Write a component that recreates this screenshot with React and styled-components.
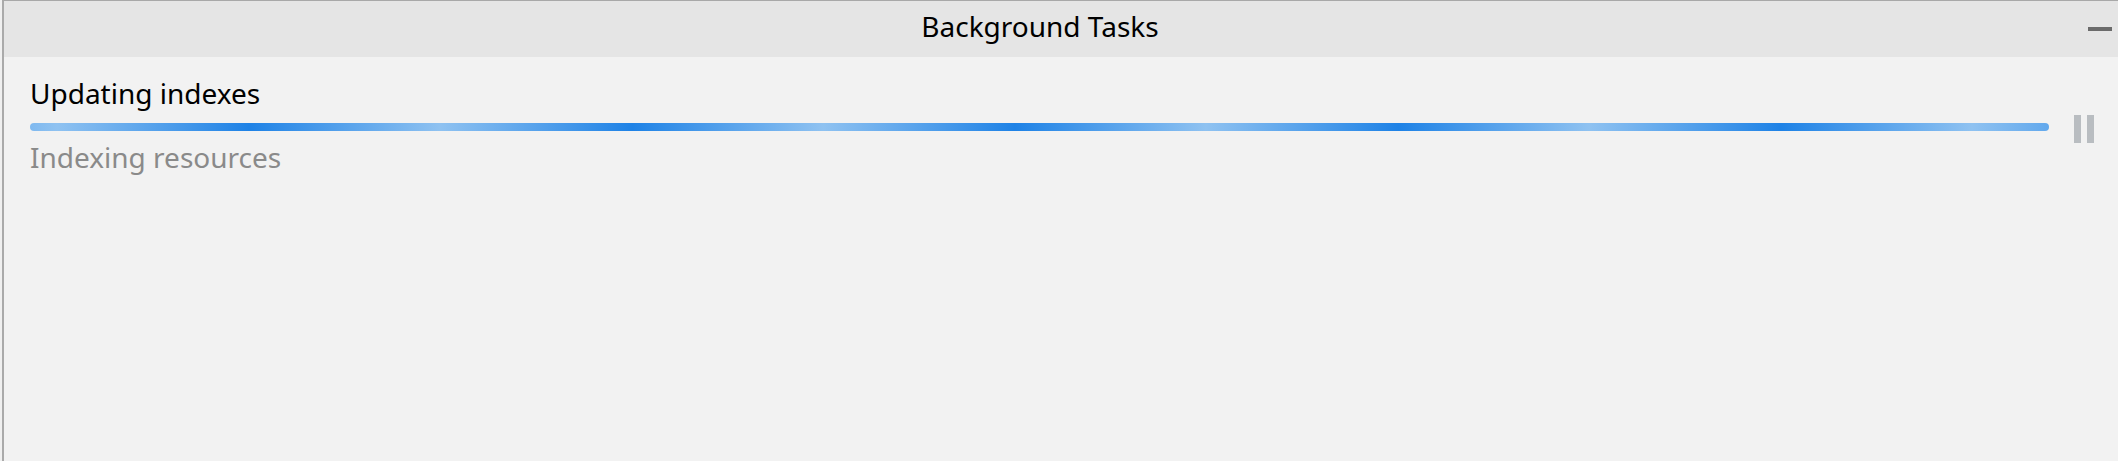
import React from "react";
import styled, { createGlobalStyle } from "styled-components";

const GlobalStyle = createGlobalStyle`
  html, body {
    margin: 0;
    padding: 0;
    background: #f2f2f2;
  }
  body {
    font-family: "Noto Sans", "Open Sans", sans-serif;
  }
`;

const Frame = styled.div`
  padding-left: 2px;
  background: #f0f0f0;
  height: 461px;
  box-sizing: border-box;
`;

const Panel = styled.div`
  height: 100%;
  box-sizing: border-box;
  border-left: 2px solid #aaaaaa;
  border-top: 1px solid #a8a8a8;
  background: #f2f2f2;
  display: flex;
  flex-direction: column;
`;

const Header = styled.div`
  height: 56px;
  background: #e5e5e5;
  display: flex;
  align-items: center;
`;

const Title = styled.div`
  flex: 1;
  text-align: center;
  font-size: 28px;
  color: #000;
  padding-bottom: 6px;
`;

const HeaderButton = styled.button`
  width: 42px;
  height: 40px;
  border: 0;
  background: transparent;
  padding: 0 6px 0 12px;
  display: flex;
  align-items: center;
  justify-content: center;
  cursor: pointer;
`;

const MinimizeMark = styled.span`
  display: block;
  width: 24px;
  height: 4px;
  background: #6b6b6b;
`;

const Body = styled.div`
  padding: 18px 24px 0 26px;
`;

const TaskRow = styled.div`
  display: flex;
  align-items: flex-start;
  gap: 25px;
`;

const TaskInfo = styled.div`
  flex: 1;
  display: flex;
  flex-direction: column;
`;

const TaskTitle = styled.div`
  font-size: 28px;
  line-height: 36px;
  color: ${(props) => props.color || "#000"};
`;

const Track = styled.div`
  height: 8px;
  margin: 12px 0 8px;
  border-radius: 4px;
  background: repeating-linear-gradient(
    90deg,
    #8fc2f1 -356px,
    #1e82e6 -164px,
    #8fc2f1 27px
  );
`;

const PauseButton = styled.button`
  width: 20px;
  height: 28px;
  padding: 0;
  border: 0;
  background: transparent;
  display: flex;
  justify-content: space-between;
  cursor: pointer;
  margin-top: 40px;
`;

const PauseBar = styled.span`
  width: 7px;
  height: 28px;
  background: #b9bdc1;
`;

export default function App() {
  return (
    <>
      <GlobalStyle />
      <Frame>
        <Panel>
          <Header>
            <Title>Background Tasks</Title>
            <HeaderButton aria-label="Minimize">
              <MinimizeMark />
            </HeaderButton>
          </Header>
          <Body>
            <TaskRow>
              <TaskInfo>
                <TaskTitle>Updating indexes</TaskTitle>
                <Track />
                <TaskTitle color="#8a8a8a">Indexing resources</TaskTitle>
              </TaskInfo>
              <PauseButton aria-label="Pause">
                <PauseBar />
                <PauseBar />
              </PauseButton>
            </TaskRow>
          </Body>
        </Panel>
      </Frame>
    </>
  );
}
